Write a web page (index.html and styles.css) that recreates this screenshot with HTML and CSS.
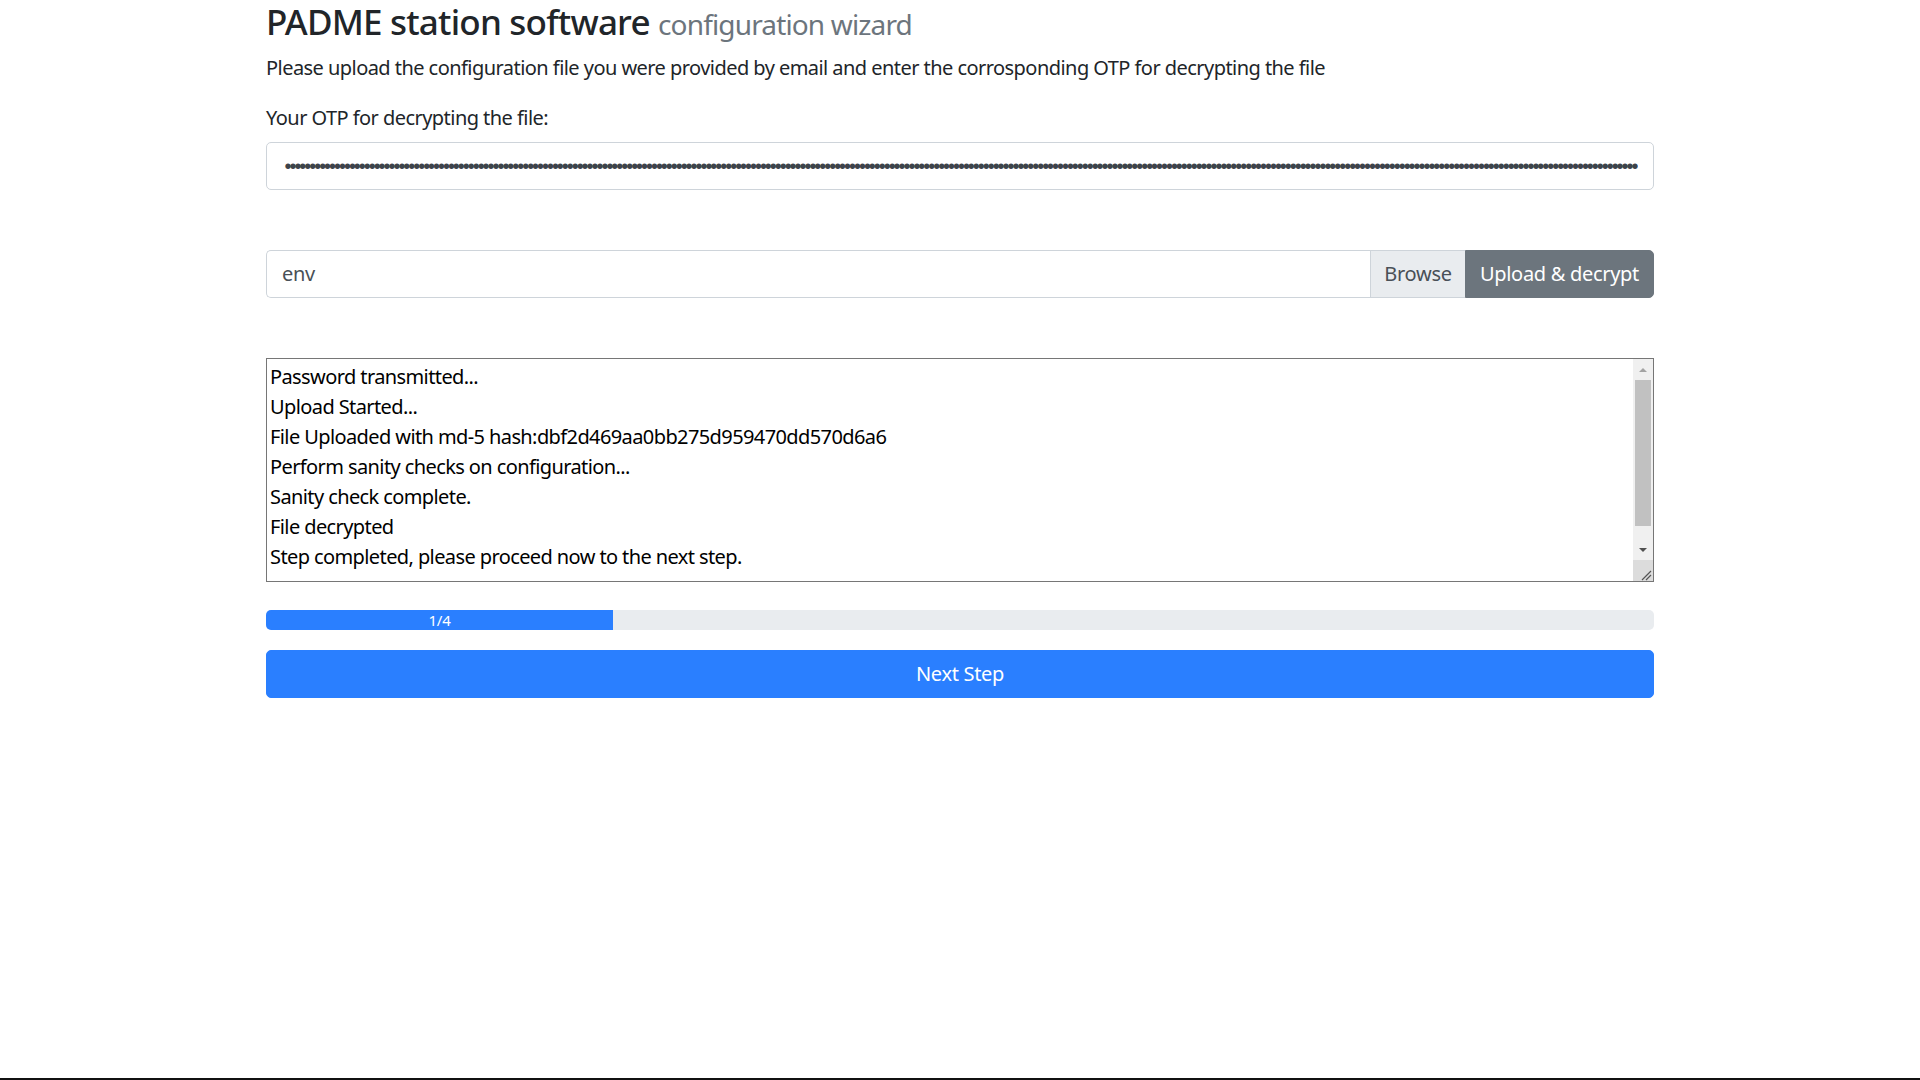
FILE: index.html
```html
<!DOCTYPE html>
<html lang="en">
<head>
<meta charset="utf-8">
<title>PADME station software configuration wizard</title>
<link rel="stylesheet" href="styles.css">
</head>
<body>
<div class="page">
  <main class="container">
    <h3 class="title">PADME station software <small>configuration wizard</small></h3>
    <p class="intro">Please upload the configuration file you were provided by email and enter the corrosponding OTP for decrypting the file</p>
    <div class="form-group">
      <label class="label">Your OTP for decrypting the file:</label>
      <div class="form-control otp"><span class="dots">•••••••••••••••••••••••••••••••••••••••••••••••••••••••••••••••••••••••••••••••••••••••••••••••••••••••••••••••••••••••••••••••••••••••••••••••••••••••••••••••••••••••••••••••••••••••••••••••••••••••••••••••••••••••••••••••••••••••••••••••••••••••••••••••••••••••••••••••••</span></div>
    </div>
    <div class="input-group">
      <div class="custom-file">
        <span class="file-name">env</span>
        <span class="browse">Browse</span>
      </div>
      <button class="btn btn-secondary" type="button">Upload &amp; decrypt</button>
    </div>
    <div class="log">
      <div class="log-text">
        <div>Password transmitted...</div>
        <div>Upload Started...</div>
        <div>File Uploaded with md-5 hash:dbf2d469aa0bb275d959470dd570d6a6</div>
        <div>Perform sanity checks on configuration...</div>
        <div>Sanity check complete.</div>
        <div>File decrypted</div>
        <div>Step completed, please proceed now to the next step.</div>
      </div>
      <div class="scrollbar">
        <div class="sb-btn"><span class="arrow-up"></span></div>
        <div class="sb-track"><div class="sb-thumb"></div></div>
        <div class="sb-btn"><span class="arrow-down"></span></div>
        <div class="sb-corner">
          <svg width="20" height="21" viewBox="0 0 20 21"><path d="M18 11 L9 20 M18 15 L13 20" stroke="#555" stroke-width="1.2" fill="none"/></svg>
        </div>
      </div>
    </div>
    <div class="progress"><div class="progress-bar" style="width:25%">1/4</div></div>
    <button class="btn btn-primary btn-block" type="button">Next Step</button>
  </main>
  <div class="taskbar"></div>
</div>
</body>
</html>
```

FILE: styles.css
```css
* { box-sizing: border-box; }
html, body { margin: 0; padding: 0; }
body {
  font-family: "Noto Sans", "Open Sans", "Liberation Sans", sans-serif;
  font-size: 20px;
  line-height: 1.5;
  color: #212529;
  background: #fff;
  letter-spacing: -0.55px;
}
.page {
  height: 100vh;
  display: flex;
  flex-direction: column;
}
.container {
  flex: 1;
  width: 1388px;
  margin: 0 auto;
  padding-top: 1px;
}
.title {
  margin: 0 0 10px;
  font-size: 35px;
  font-weight: 500;
  line-height: 1.2;
  letter-spacing: -0.8px;
}
.title small {
  font-size: 80%;
  font-weight: 400;
  color: #6c757d;
  letter-spacing: -0.85px;
}
.intro {
  margin: 0 0 20px;
}
.label {
  display: block;
  margin-bottom: 9px;
}
.form-group { margin-bottom: 60px; }
.form-control {
  height: 48px;
  border: 1px solid #ced4da;
  border-radius: 5px;
  padding: 0 15px;
  color: #495057;
  background: #fff;
  display: flex;
  align-items: center;
}
.otp { overflow: hidden; }
.dots {
  display: block;
  white-space: nowrap;
  overflow: hidden;
  width: 100%;
  padding-top: 3px;
  line-height: 24px;
  font-family: "Liberation Mono", monospace;
  font-size: 20px;
  letter-spacing: -7.05px;
  color: #3d434a;
}
.input-group {
  display: flex;
  height: 48px;
  margin-bottom: 60px;
}
.custom-file {
  flex: 1;
  display: flex;
  border: 1px solid #ced4da;
  border-right: none;
  border-radius: 5px 0 0 5px;
  overflow: hidden;
}
.file-name {
  flex: 1;
  display: flex;
  align-items: center;
  padding: 0 15px;
  color: #495057;
  letter-spacing: -0.3px;
}
.browse {
  display: flex;
  align-items: center;
  padding: 0 13px;
  width: 95px;
  justify-content: center;
  background: #e9ecef;
  border-left: 1px solid #ced4da;
  color: #495057;
  letter-spacing: -0.3px;
}
.btn {
  font-family: inherit;
  font-size: 20px;
  line-height: 1.5;
  border: 1px solid transparent;
  cursor: pointer;
  letter-spacing: -0.3px;
}
.btn-secondary {
  width: 189px;
  background: #6c757d;
  border-color: #6c757d;
  color: #fff;
  border-radius: 0 5px 5px 0;
  padding: 0 12px;
}
.log {
  display: flex;
  height: 224px;
  border: 1px solid #767676;
  margin-bottom: 28px;
  background: #fff;
}
.log-text {
  flex: 1;
  padding: 3px 3px;
  color: #000;
  line-height: 30px;
  overflow: hidden;
  letter-spacing: -0.6px;
}
.scrollbar {
  width: 20px;
  display: flex;
  flex-direction: column;
  background: #f0f0f0;
}
.sb-btn {
  height: 21px;
  display: flex;
  align-items: center;
  justify-content: center;
}
.arrow-up {
  width: 0; height: 0;
  border-left: 4px solid transparent;
  border-right: 4px solid transparent;
  border-bottom: 4px solid #a3a3a3;
}
.arrow-down {
  width: 0; height: 0;
  border-left: 4px solid transparent;
  border-right: 4px solid transparent;
  border-top: 4px solid #505050;
}
.sb-track {
  flex: 1;
  padding: 0 2px;
}
.sb-thumb {
  height: 146px;
  background: #c1c1c1;
}
.sb-corner {
  height: 21px;
  background: #dcdcdc;
  display: flex;
}
.progress {
  height: 20px;
  background: #e9ecef;
  border-radius: 5px;
  overflow: hidden;
  display: flex;
  margin-bottom: 20px;
}
.progress-bar {
  background: #2a7fff;
  color: #fff;
  font-size: 15px;
  line-height: 20px;
  text-align: center;
  letter-spacing: -0.2px;
}
.btn-primary {
  display: block;
  width: 100%;
  height: 48px;
  background: #2a7fff;
  border-color: #2a7fff;
  color: #fff;
  border-radius: 5px;
}
.taskbar {
  height: 2px;
  background: #111;
  flex: none;
}
```
